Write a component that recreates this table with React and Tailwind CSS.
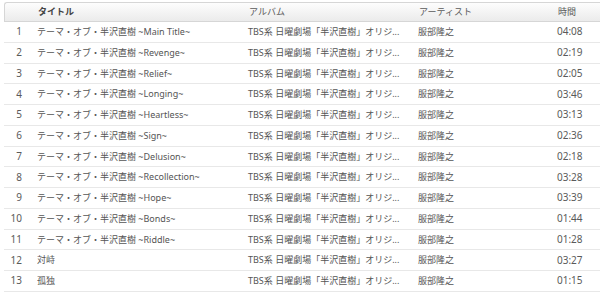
const tracks = [
  ['1', 'テーマ・オブ・半沢直樹 ~Main Title~', '04:08'],
  ['2', 'テーマ・オブ・半沢直樹 ~Revenge~', '02:19'],
  ['3', 'テーマ・オブ・半沢直樹 ~Relief~', '02:05'],
  ['4', 'テーマ・オブ・半沢直樹 ~Longing~', '03:46'],
  ['5', 'テーマ・オブ・半沢直樹 ~Heartless~', '03:13'],
  ['6', 'テーマ・オブ・半沢直樹 ~Sign~', '02:36'],
  ['7', 'テーマ・オブ・半沢直樹 ~Delusion~', '02:18'],
  ['8', 'テーマ・オブ・半沢直樹 ~Recollection~', '03:28'],
  ['9', 'テーマ・オブ・半沢直樹 ~Hope~', '03:39'],
  ['10', 'テーマ・オブ・半沢直樹 ~Bonds~', '01:44'],
  ['11', 'テーマ・オブ・半沢直樹 ~Riddle~', '01:28'],
  ['12', '対峙', '03:27'],
  ['13', '孤独', '01:15'],
];

const cols = 'grid grid-cols-[33px_211px_170px_139px_1fr] items-center';

export default function App() {
  return (
    <div
      className="w-[600px] h-[307px] bg-white pt-[2px] pl-[4px] overflow-hidden text-[9px] text-[#555]"
      style={{ fontFamily: '"Noto Sans", "Noto Sans CJK JP", sans-serif' }}
    >
      <div className={`${cols} h-[20px] border border-r-0 border-[#d6d6d6] rounded-tl-[3px] bg-gradient-to-b from-[#fdfdfd] to-[#ebebeb] text-[#5a5a5a]`}>
        <div />
        <div className="font-bold text-[#444]">タイトル</div>
        <div>アルバム</div>
        <div>アーティスト</div>
        <div>時間</div>
      </div>
      {tracks.map(([no, title, time]) => (
        <div key={no} className={`${cols} h-[20.75px] border-b border-[#e8e8e8]`}>
          <div className="text-right pr-[15px] text-[#5a5a5a] text-[10px]">{no}</div>
          <div className="truncate">{title}</div>
          <div className="whitespace-nowrap">TBS系 日曜劇場「半沢直樹」オリジ...</div>
          <div>服部隆之</div>
          <div className="text-[#5a5a5a] text-[10px]">{time}</div>
        </div>
      ))}
    </div>
  );
}
